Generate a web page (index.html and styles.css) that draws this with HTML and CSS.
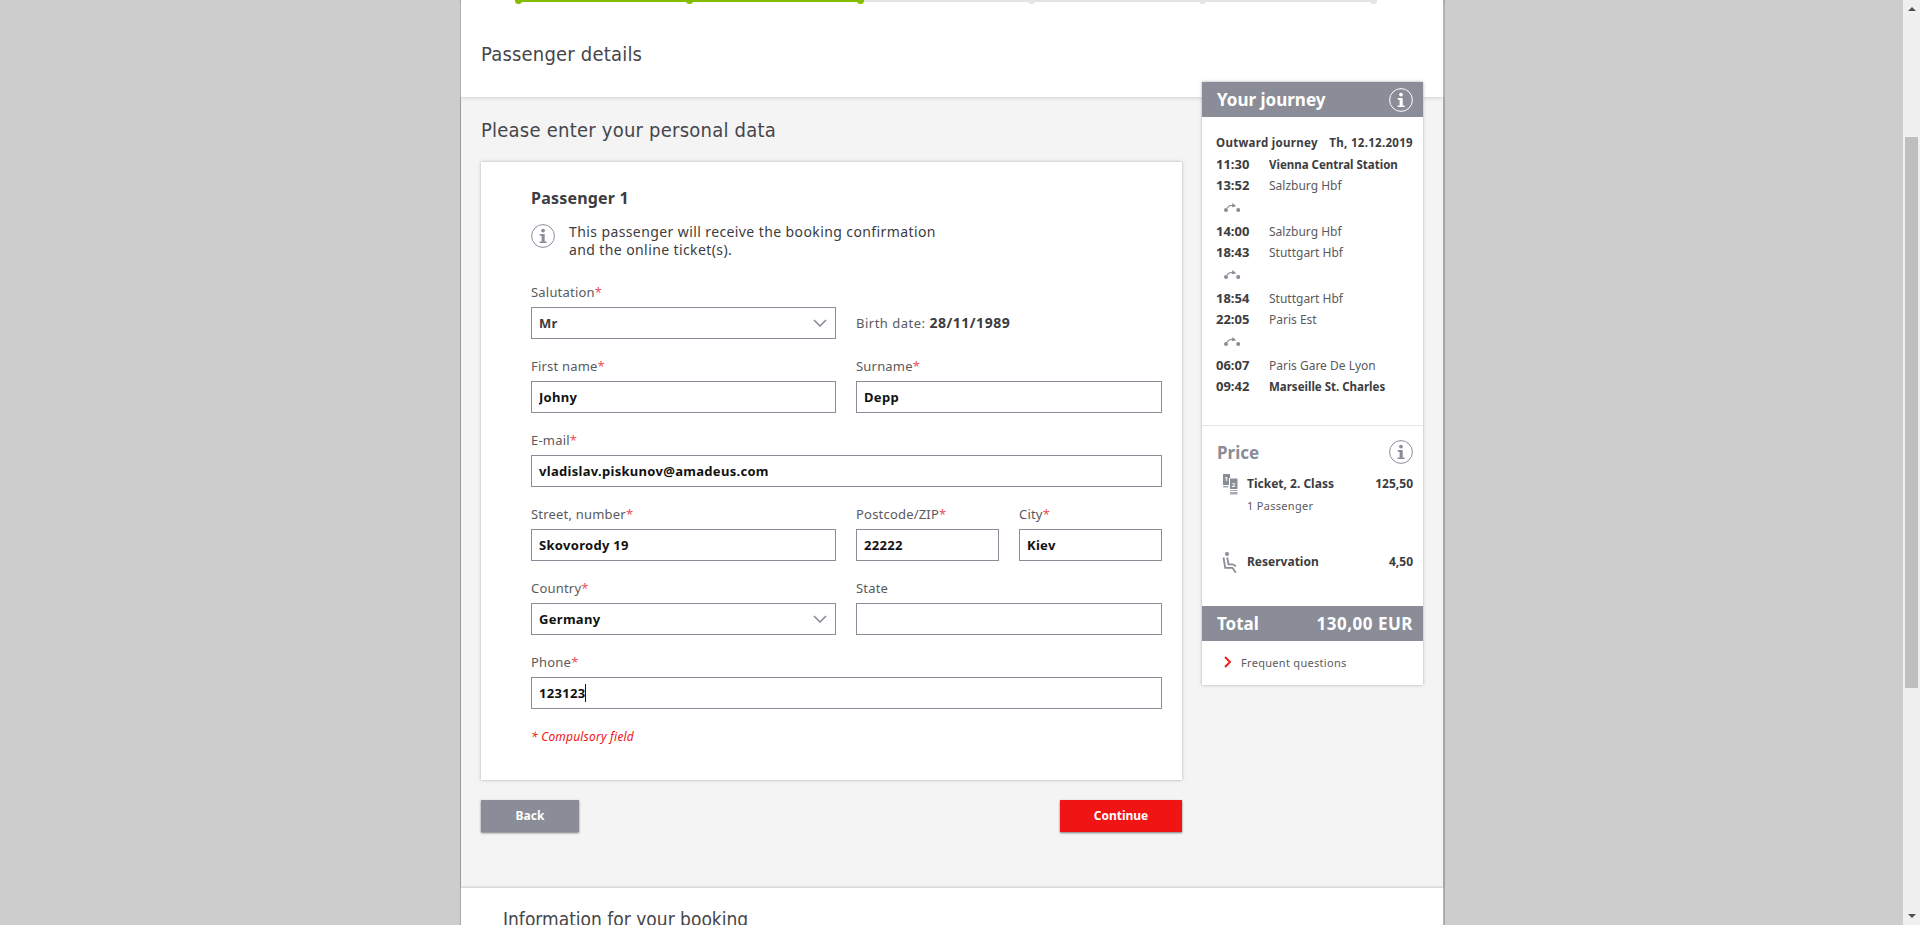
FILE: index.html
```html
<!DOCTYPE html>
<html lang="en">

<head>
    <meta charset="UTF-8">
    <meta name="viewport" content="width=device-width, initial-scale=1.0">
    <title>Passenger details</title>
    <link rel="stylesheet" href="styles.css">
</head>

<body>
    <svg class="sprites" width="0" height="0" aria-hidden="true">
        <symbol id="info" viewBox="0 0 24 24">
            <circle cx="12" cy="12" r="11.4" fill="none" stroke="currentColor" stroke-width="1"/>
            <circle cx="12" cy="6.6" r="1.9" fill="currentColor"/>
            <path d="M8.8 10h4.900v7.400h1.900v1.700H8.600v-1.700h2v-5.700H8.800z" fill="currentColor"/>
        </symbol>
        <symbol id="chevron" viewBox="0 0 14 8">
            <path d="M1 1l6 6 6-6" fill="none" stroke="currentColor" stroke-width="1.6"/>
        </symbol>
        <symbol id="change" viewBox="0 0 16 10">
            <circle cx="2" cy="7" r="2" fill="currentColor"/>
            <circle cx="14.200" cy="7" r="2" fill="currentColor"/>
            <path d="M3 5C4.400 3 6 2.300 8 2.300c.8 0 1.300.1 2 .4" fill="none" stroke="currentColor" stroke-width="1.300"/>
            <path d="M8.500 0l3.800 3.300-4.300 1z" fill="currentColor"/>
        </symbol>
    </svg>

    <div class="viewport">
        <div class="page">
            <header class="top">
                <div class="steps">
                    <span class="step done"></span>
                    <span class="step done"></span>
                    <span class="step current"></span>
                    <span class="step"></span>
                    <span class="step"></span>
                    <span class="step last"></span>
                </div>
                <h1>Passenger details</h1>
            </header>

            <main class="content">
                <div class="left">
                    <h2>Please enter your personal data</h2>
                    <form class="card">
                        <h3>Passenger 1</h3>
                        <div class="notice">
                            <svg class="icon-info"><use href="#info"/></svg>
                            <p>This passenger will receive the booking confirmation<br>and the online ticket(s).</p>
                        </div>

                        <div class="grid">
                            <div class="field half">
                                <label for="salutation">Salutation<i>*</i></label>
                                <div class="select">
                                    <select id="salutation" class="muted"><option>Mr</option></select>
                                    <svg class="chevron"><use href="#chevron"/></svg>
                                </div>
                            </div>
                            <div class="field half birth">Birth date: <b>28/11/1989</b></div>

                            <div class="field half">
                                <label for="first">First name<i>*</i></label>
                                <input id="first" type="text" value="Johny">
                            </div>
                            <div class="field half">
                                <label for="surname">Surname<i>*</i></label>
                                <input id="surname" type="text" value="Depp">
                            </div>

                            <div class="field full">
                                <label for="email">E-mail<i>*</i></label>
                                <input id="email" type="text" value="vladislav.piskunov@amadeus.com">
                            </div>

                            <div class="field half">
                                <label for="street">Street, number<i>*</i></label>
                                <input id="street" type="text" value="Skovorody 19">
                            </div>
                            <div class="field half split">
                                <div class="field">
                                    <label for="zip">Postcode/ZIP<i>*</i></label>
                                    <input id="zip" type="text" value="22222">
                                </div>
                                <div class="field">
                                    <label for="city">City<i>*</i></label>
                                    <input id="city" type="text" value="Kiev">
                                </div>
                            </div>

                            <div class="field half">
                                <label for="country">Country<i>*</i></label>
                                <div class="select">
                                    <select id="country"><option>Germany</option></select>
                                    <svg class="chevron"><use href="#chevron"/></svg>
                                </div>
                            </div>
                            <div class="field half">
                                <label for="state">State</label>
                                <input id="state" type="text">
                            </div>

                            <div class="field full">
                                <label>Phone<i>*</i></label>
                                <div class="input-focused"><span class="caret">123123</span></div>
                            </div>
                        </div>

                        <p class="compulsory">* Compulsory field</p>
                    </form>

                    <div class="buttons">
                        <button class="btn back" type="button">Back</button>
                        <button class="btn next" type="button">Continue</button>
                    </div>
                </div>

                <aside class="summary">
                    <div class="bar">
                        <span>Your journey</span>
                        <svg class="icon-info"><use href="#info"/></svg>
                    </div>
                    <div class="journey">
                        <div class="outward"><b>Outward journey</b><b>Th, 12.12.2019</b></div>
                        <div class="stop"><b>11:30</b><b>Vienna Central Station</b></div>
                        <div class="stop"><b>13:52</b><span>Salzburg Hbf</span></div>
                        <svg class="change"><use href="#change"/></svg>
                        <div class="stop"><b>14:00</b><span>Salzburg Hbf</span></div>
                        <div class="stop"><b>18:43</b><span>Stuttgart Hbf</span></div>
                        <svg class="change"><use href="#change"/></svg>
                        <div class="stop"><b>18:54</b><span>Stuttgart Hbf</span></div>
                        <div class="stop"><b>22:05</b><span>Paris Est</span></div>
                        <svg class="change"><use href="#change"/></svg>
                        <div class="stop"><b>06:07</b><span>Paris Gare De Lyon</span></div>
                        <div class="stop"><b>09:42</b><b>Marseille St. Charles</b></div>
                    </div>
                    <div class="price">
                        <div class="price-head">
                            <span>Price</span>
                            <svg class="icon-info"><use href="#info"/></svg>
                        </div>
                        <div class="price-row ticket">
                            <svg class="price-icon" viewBox="0 0 16 21">
                                <path d="M1 0h7v4H7v7H1z" fill="#8a8d97"/>
                                <path d="M1 12h5.500v1.500H1z" fill="#a9abb3"/>
                                <path d="M8 4.500h7.500V15H8z" fill="#8a8d97"/>
                                <path d="M8 16h7.500v1H8zM8 18h7.500v2.500H8z" fill="#a9abb3"/>
                                <text x="2.500" y="6.500" class="num">1</text>
                                <text x="9.800" y="12.500" class="num">2</text>
                            </svg>
                            <div class="price-text">
                                <b>Ticket, 2. Class</b>
                                <span>1 Passenger</span>
                            </div>
                            <b>125,50</b>
                        </div>
                        <div class="price-row seat">
                            <svg class="price-icon" viewBox="0 0 16 21">
                                <circle cx="5" cy="2" r="2" fill="#8a8d97"/>
                                <path d="M1.500 5.500l1.700 10.300h7.300l3.300 4.900M5.200 5.500l1.300 6.800h4.200l3.300 2" fill="none" stroke="#8a8d97" stroke-width="1.800"/>
                            </svg>
                            <div class="price-text"><b>Reservation</b></div>
                            <b>4,50</b>
                        </div>
                    </div>
                    <div class="bar total">
                        <span>Total</span>
                        <span class="sum">130,00 EUR</span>
                    </div>
                    <a class="faq" href="#">
                        <svg class="faq-arrow" viewBox="0 0 8 12"><path d="M1 1l5 5-5 5" fill="none" stroke="#f01414" stroke-width="1.800"/></svg>
                        Frequent questions
                    </a>
                </aside>
            </main>

            <section class="info">
                <h2>Information for your booking</h2>
            </section>
        </div>

        <div class="scrollbar">
            <span class="arrow up"></span>
            <div class="track"><div class="thumb"></div></div>
            <span class="arrow down"></span>
        </div>
    </div>
</body>

</html>
```

FILE: styles.css
```css
* {
    box-sizing: border-box;
}

html,
body {
    margin: 0;
    height: 925px;
    overflow: hidden;
}

body {
    background-color: #cdcdcd;
    color: #3c3c41;
    font-family: "Noto Sans", sans-serif;
    font-size: 13px;
}

.sprites {
    display: block;
    height: 0;
}

h1,
h2,
h3,
p {
    margin: 0;
    font-weight: normal;
}

.viewport {
    display: flex;
    height: 925px;
    justify-content: space-between;
}

.page {
    width: 985px;
    height: 925px;
    margin-left: 460px;
    background-color: #f4f4f4;
    border-left: 1px solid #999999;
    border-right: 2px solid #a5a5a5;
}

/* top */
.top {
    height: 97px;
    background-color: #ffffff;
    box-shadow: 0 1px 4px #d0d0d0;
    position: relative;
}

.steps {
    display: flex;
    padding-left: 57px;
    height: 2px;
}

.step {
    position: relative;
    width: 171px;
    height: 2px;
    background-color: #e4e4e4;
}

.step::before {
    content: "";
    position: absolute;
    left: -3px;
    top: -3px;
    width: 7px;
    height: 7px;
    border-radius: 50%;
    background-color: #e4e4e4;
}

.step.done {
    background-color: #84bc00;
}

.step.done::before,
.step.current::before {
    background-color: #84bc00;
}

.step.last {
    width: 0;
}

.top h1 {
    padding: 39px 0 0 20px;
    font-family: "DejaVu Sans", sans-serif;
    font-stretch: condensed;
    font-size: 20px;
    line-height: 26px;
    letter-spacing: 0.2px;
    color: #46464b;
}

/* main */
.content {
    display: flex;
    align-items: flex-start;
    height: 791px;
    padding-left: 20px;
    gap: 20px;
}

.left {
    width: 701px;
}

.left > h2 {
    padding-top: 19px;
    height: 65px;
    font-family: "DejaVu Sans", sans-serif;
    font-stretch: condensed;
    font-size: 20px;
    line-height: 28px;
    letter-spacing: 0.23px;
    color: #46464b;
}

.card {
    height: 618px;
    padding: 24px 20px 0 50px;
    background-color: #ffffff;
    box-shadow: 0 0 3px #aaaaaa;
}

.card h3 {
    font-size: 16px;
    line-height: 25px;
    font-weight: bold;
    letter-spacing: 0.2px;
    color: #3c3c41;
}

.notice {
    display: flex;
    gap: 14px;
    margin-top: 13px;
    height: 54px;
}

.notice .icon-info {
    width: 24px;
    height: 24px;
    color: #8a8d97;
    flex: none;
}

.notice p {
    font-size: 14px;
    line-height: 18px;
    letter-spacing: 0.4px;
    margin-top: -1px;
}

.grid {
    display: grid;
    grid-template-columns: 305px 306px;
    column-gap: 20px;
    row-gap: 18px;
    margin-top: 5px;
}

.field {
    display: flex;
    flex-direction: column;
    min-width: 0;
}

.full {
    grid-column: 1 / 3;
}

.split {
    flex-direction: row;
    gap: 20px;
}

.split .field:first-child {
    width: 143px;
}

.split .field:last-child {
    flex: 1;
}

label {
    height: 24px;
    font-size: 13px;
    line-height: 18px;
    color: #5a5a60;
    letter-spacing: 0.2px;
}

label i {
    color: #f0505a;
    font-style: normal;
}

input[type="text"],
select,
.input-focused {
    width: 100%;
    height: 32px;
    padding: 0 7px;
    border: 1px solid #8a8d97;
    background-color: #ffffff;
    font-family: "Noto Sans", sans-serif;
    font-size: 13px;
    font-weight: bold;
    color: #111111;
    border-radius: 0;
    letter-spacing: 0.3px;
    outline: none;
}

.input-focused {
    display: flex;
    align-items: center;
}

.caret {
    border-right: 1px solid #111111;
    line-height: 18px;
}

select {
    appearance: none;
}

select.muted {
    color: #3c3c41;
}

.select {
    position: relative;
}

.chevron {
    position: absolute;
    right: 9px;
    top: 12px;
    width: 14px;
    height: 8px;
    color: #8a8d97;
}

.birth {
    display: block;
    padding-top: 31px;
    line-height: 18px;
    color: #5a5a60;
    letter-spacing: 0.5px;
}

.birth b {
    font-size: 14px;
    color: #3c3c41;
}

.compulsory {
    margin-top: 19px;
    font-size: 12px;
    line-height: 18px;
    font-style: italic;
    letter-spacing: 0.2px;
    color: #f01414;
}

.buttons {
    display: flex;
    justify-content: space-between;
    margin-top: 20px;
}

.btn {
    height: 32px;
    padding: 0 0 2px;
    border: none;
    font-family: "Noto Sans", sans-serif;
    font-size: 12px;
    font-weight: bold;
    color: #ffffff;
    box-shadow: 0 1px 2px #777777;
}

.back {
    width: 98px;
    background-color: #8a8d97;
}

.next {
    width: 122px;
    background-color: #f01414;
}

/* right box */
.summary {
    position: relative;
    z-index: 2;
    width: 221px;
    height: 603px;
    margin-top: -15px;
    background-color: #ffffff;
    box-shadow: 0 0 3px #aaaaaa;
}

.bar {
    display: flex;
    justify-content: space-between;
    align-items: center;
    height: 35px;
    padding: 0 10px 0 15px;
    background-color: #8a8d97;
    color: #ffffff;
    font-weight: bold;
    font-size: 17px;
}

.bar .icon-info {
    width: 24px;
    height: 24px;
}

.sum {
    letter-spacing: 0.5px;
}

.journey {
    height: 309px;
    padding: 15px 10px 0 14px;
    font-size: 11.5px;
    border-bottom: 1px solid #e4e4e4;
}

.outward {
    display: flex;
    justify-content: space-between;
    height: 22px;
    line-height: 22px;
    letter-spacing: 0.3px;
}

.stop {
    display: flex;
    height: 21px;
    line-height: 21px;
}

.stop b:first-child {
    width: 53px;
    font-size: 13px;
    flex: none;
}

.stop span {
    font-size: 12px;
    color: #5a5a60;
}

.change {
    display: block;
    width: 16px;
    height: 10px;
    margin: 7px 0 8px 8px;
    color: #8a8d97;
}

.price {
    height: 180px;
    padding: 14px 10px 0 15px;
    font-size: 12px;
}

.price-head {
    display: flex;
    justify-content: space-between;
    align-items: center;
    height: 24px;
    color: #8a8d97;
    font-weight: bold;
    font-size: 17px;
}

.price-head .icon-info {
    width: 24px;
    height: 24px;
    color: #8a8d97;
}

.price-row {
    display: flex;
    align-items: flex-start;
}

.ticket {
    margin-top: 10px;
    height: 78px;
}

.price-icon {
    width: 16px;
    height: 21px;
    margin: 0 9px 0 5px;
    flex: none;
}

.num {
    font-size: 6px;
    font-weight: bold;
    fill: #ffffff;
}

.price-text {
    flex: 1;
    display: flex;
    flex-direction: column;
    gap: 6px;
    margin-top: 2px;
    line-height: 16px;
}

.price-text span {
    font-size: 11px;
    letter-spacing: 0.3px;
    color: #5a5a60;
}

.price-row > b {
    margin-top: 2px;
    line-height: 16px;
}

.faq {
    display: flex;
    align-items: center;
    gap: 9px;
    height: 44px;
    padding: 0 0 2px 22px;
    font-size: 11px;
    color: #5a5a60;
    text-decoration: none;
    letter-spacing: 0.3px;
}

.faq-arrow {
    width: 8px;
    height: 12px;
}

/* footer */
.info {
    position: relative;
    height: 60px;
    background-color: #ffffff;
    box-shadow: 0 -1px 2px #cccccc;
    padding: 17px 0 0 42px;
}

.info h2 {
    font-family: "DejaVu Sans", sans-serif;
    font-stretch: condensed;
    font-size: 19px;
    line-height: 28px;
    color: #46464b;
}

/* scrollbar */
.scrollbar {
    display: flex;
    flex-direction: column;
    align-items: center;
    width: 17px;
    height: 925px;
    background-color: #f0f0f0;
}

.track {
    flex: 1;
    width: 13px;
    padding-top: 119px;
}

.thumb {
    height: 551px;
    background-color: #bebebe;
}

.arrow {
    width: 0;
    height: 0;
    border-left: 4px solid transparent;
    border-right: 4px solid transparent;
    margin: 7px 0;
}

.arrow.up {
    border-bottom: 4px solid #505050;
}

.arrow.down {
    border-top: 4px solid #505050;
}
```
